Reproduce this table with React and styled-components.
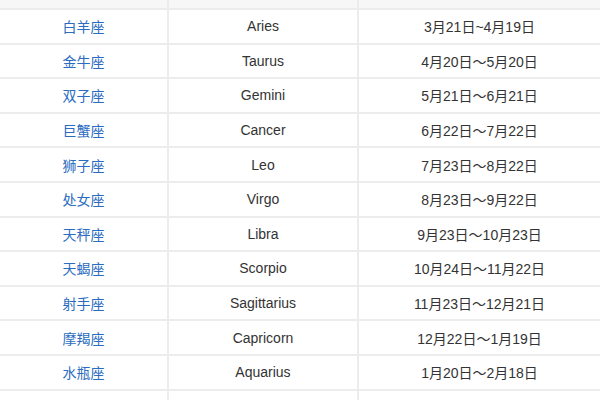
import React from "react";
import styled, { createGlobalStyle } from "styled-components";

const Global = createGlobalStyle`
  html, body { margin: 0; padding: 0; background: #fff; }
  body { width: 600px; height: 400px; overflow: hidden; }
`;

const Table = styled.div`
  width: 600px;
  height: 400px;
  overflow: hidden;
  font-family: "Liberation Sans", "Noto Sans CJK SC", sans-serif;
  font-size: 14px;
  color: #333;
`;

const Row = styled.div`
  display: grid;
  grid-template-columns: 167px 190px 1fr;
  height: ${(p) => (p.$head ? "10px" : "34.6px")};
  box-sizing: border-box;
  border-bottom: 2px solid #ececec;
  background: ${(p) => (p.$head ? "#f7f7f7" : "#fff")};
`;

const Cell = styled.div`
  display: flex;
  align-items: center;
  justify-content: center;
  box-sizing: border-box;
  border-left: ${(p) => (p.$first ? "none" : "2px solid #ececec")};
  color: ${(p) => (p.$link ? "#2b6cc0" : "#333")};
  white-space: nowrap;
  overflow: hidden;
`;

const data = [
  ["白羊座", "Aries", "3月21日~4月19日"],
  ["金牛座", "Taurus", "4月20日～5月20日"],
  ["双子座", "Gemini", "5月21日～6月21日"],
  ["巨蟹座", "Cancer", "6月22日～7月22日"],
  ["狮子座", "Leo", "7月23日～8月22日"],
  ["处女座", "Virgo", "8月23日～9月22日"],
  ["天秤座", "Libra", "9月23日～10月23日"],
  ["天蝎座", "Scorpio", "10月24日～11月22日"],
  ["射手座", "Sagittarius", "11月23日～12月21日"],
  ["摩羯座", "Capricorn", "12月22日～1月19日"],
  ["水瓶座", "Aquarius", "1月20日～2月18日"],
  ["双鱼座", "Pisces", "2月19日～3月20日"],
];

export default function App() {
  return (
    <>
      <Global />
      <Table>
        <Row $head>
          <Cell $first />
          <Cell />
          <Cell />
        </Row>
        {data.map(([cn, en, date]) => (
          <Row key={cn}>
            <Cell $first $link>{cn}</Cell>
            <Cell>{en}</Cell>
            <Cell>{date}</Cell>
          </Row>
        ))}
      </Table>
    </>
  );
}
